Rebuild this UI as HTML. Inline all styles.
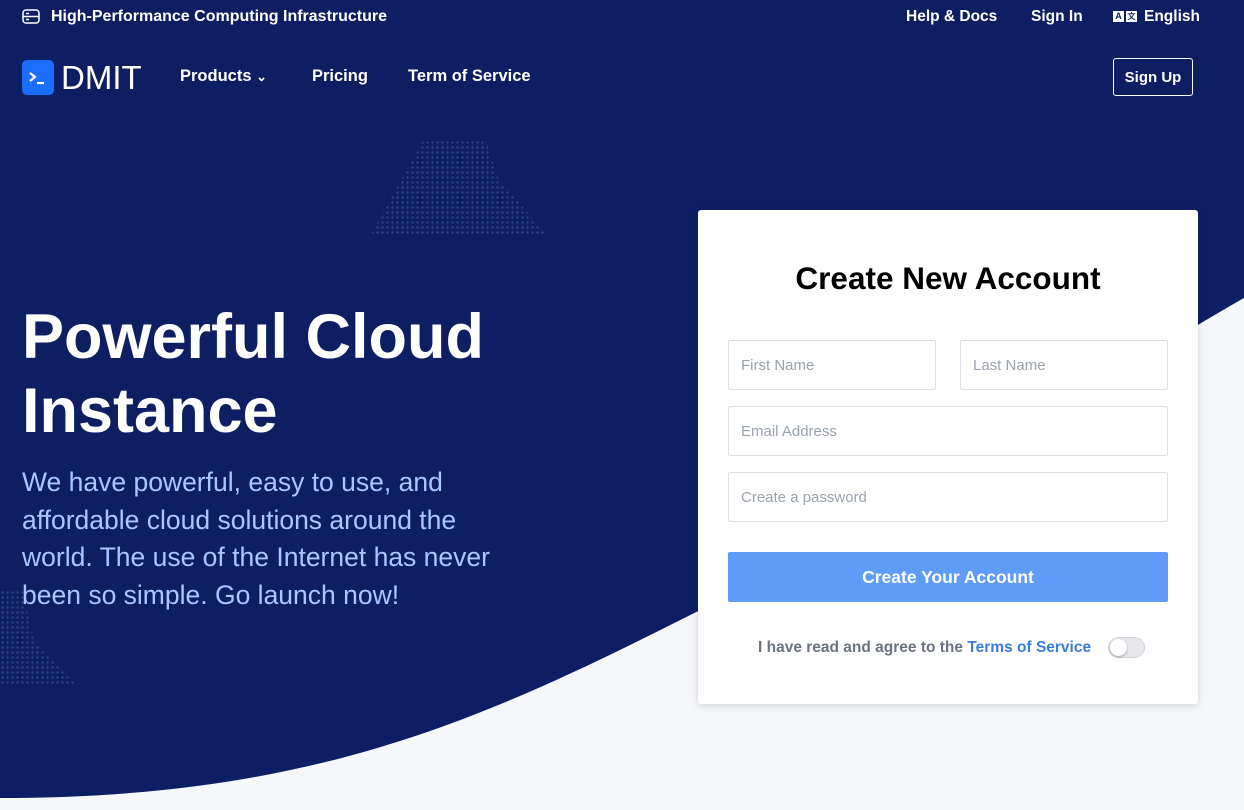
<!DOCTYPE html>
<html><head><meta charset="utf-8"><style>
*{box-sizing:border-box;margin:0;padding:0}
body{width:1244px;height:810px;overflow:hidden;background:#0e1e63;font-family:"Liberation Sans",sans-serif;position:relative}
.bg{position:absolute;left:0;top:0}
.top{position:absolute;top:8px;color:#fff;font-weight:bold;font-size:16px}
.nav{position:absolute;top:67px;color:#fff;font-weight:bold;font-size:17px}
.dots{position:absolute;background-image:radial-gradient(rgba(120,140,210,.35) 1px,transparent 1.3px);background-size:5px 5px}
h1{position:absolute;left:22px;top:300px;color:#fff;font-size:63px;line-height:74px;font-weight:bold}
.lead{position:absolute;left:22px;top:464px;color:#a9c8ff;font-size:26.5px;line-height:37.5px;white-space:nowrap}
.card{position:absolute;left:698px;top:210px;width:500px;height:494px;background:#fff;border-radius:3px;box-shadow:0 2px 8px rgba(0,0,0,.15)}
.card h2{position:absolute;top:50px;width:100%;text-align:center;font-size:31.5px;color:#000}
.in{position:absolute;height:50px;border:1px solid #dde1e6;border-radius:2px;color:#9aa3ad;font-size:15px;padding:16px 12px}
.btn{position:absolute;left:30px;top:342px;width:440px;height:50px;background:#5f9cf8;border-radius:2px;color:#fff;font-weight:bold;font-size:17.5px;text-align:center;line-height:50px}
.agree{position:absolute;top:429px;left:60px;font-size:15.5px;font-weight:bold;color:#6b7280;white-space:nowrap}
.tog{position:absolute;left:410px;top:427px;width:37px;height:21px;border-radius:11px;background:#e5e7eb;border:1px solid #d1d5db}
.tog:after{content:"";position:absolute;left:1px;top:1px;width:17px;height:17px;border-radius:50%;background:#fff;box-shadow:0 1px 2px rgba(0,0,0,.3)}
</style></head><body>
<svg class="bg" width="1244" height="810"><path d="M0,798 C350,798 520,700 760,580 S1100,380 1244,298 L1244,810 L0,810 Z" fill="#f5f7fb"/></svg>
<div class="dots" style="left:370px;top:140px;width:178px;height:96px;clip-path:polygon(30% 0,65% 0,72% 40%,100% 100%,0 100%,18% 40%)"></div>
<div class="dots" style="left:0;top:590px;width:76px;height:94px;clip-path:polygon(0 0,30% 0,45% 55%,100% 100%,0 100%)"></div>
<svg style="position:absolute;left:22px;top:9px" width="18" height="15" viewBox="0 0 18 15" fill="none" stroke="#fff" stroke-width="1.5"><rect x="1" y="1" width="16" height="13" rx="3"/><line x1="1" y1="7.5" x2="17" y2="7.5"/><line x1="4" y1="4.5" x2="7" y2="4.5"/><line x1="4" y1="10.5" x2="7" y2="10.5"/></svg>
<div class="top" style="left:51px">High-Performance Computing Infrastructure</div>
<div class="top" style="left:906px;font-size:15.5px">Help &amp; Docs</div>
<div class="top" style="left:1031px;font-size:15.5px">Sign In</div>
<div style="position:absolute;left:1113px;top:11px;width:11px;height:11px;background:#fff;font-size:9px;font-weight:bold;color:#0e1e63;line-height:11px;text-align:center">A</div>
<div style="position:absolute;left:1126px;top:11px;width:11px;height:11px;background:#fff;font-size:8px;font-weight:bold;color:#0e1e63;line-height:11px;text-align:center">文</div>
<div class="top" style="left:1144px;font-size:15.5px">English</div>
<div style="position:absolute;left:22px;top:60px;width:32px;height:35px;background:#1a6dff;border-radius:5px"></div>
<svg style="position:absolute;left:22px;top:60px" width="32" height="35"><path d="M8,13 L13,17 L8,21" stroke="#fff" stroke-width="2.2" fill="none"/><line x1="15" y1="23" x2="22" y2="23" stroke="#fff" stroke-width="2.2"/></svg>
<div style="position:absolute;left:61px;top:59px;color:#fff;font-size:33px">DMIT</div>
<div class="nav" style="left:180px;font-size:16.5px">Products <span style="font-size:13px">&#8964;</span></div>
<div class="nav" style="left:312px;font-size:16.5px">Pricing</div>
<div class="nav" style="left:408px;font-size:16.5px">Term of Service</div>
<div style="position:absolute;left:1113px;top:58px;width:80px;height:38px;border:1px solid #fff;border-radius:3px;color:#fff;font-weight:bold;font-size:15px;text-align:center;line-height:38px">Sign Up</div>
<h1>Powerful Cloud<br>Instance</h1>
<div class="lead">We have powerful, easy to use, and<br>affordable cloud solutions around the<br>world. The use of the Internet has never<br>been so simple. Go launch now!</div>
<div class="card">
<h2>Create New Account</h2>
<div class="in" style="left:30px;top:130px;width:208px">First Name</div>
<div class="in" style="left:262px;top:130px;width:208px">Last Name</div>
<div class="in" style="left:30px;top:196px;width:440px">Email Address</div>
<div class="in" style="left:30px;top:262px;width:440px">Create a password</div>
<div class="btn">Create Your Account</div>
<div class="agree">I have read and agree to the <span style="color:#3b7ddd">Terms of Service</span></div>
<div class="tog"></div>
</div>
</body></html>
